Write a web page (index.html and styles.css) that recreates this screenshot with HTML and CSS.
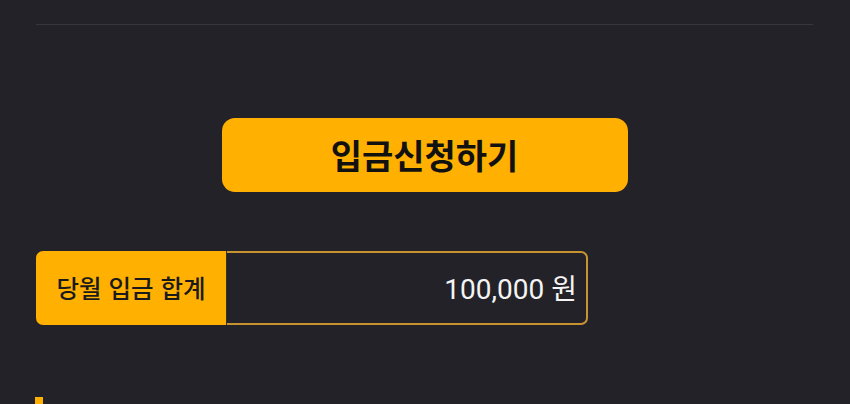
FILE: index.html
```html
<!DOCTYPE html>
<html lang="ko">
<head>
    <meta charset="UTF-8">
    <title>입금신청</title>
    <link rel="stylesheet" href="styles.css">
</head>
<body>
    <div class="wrap">
        <div class="topline"></div>
        <div class="btnbox">
            <button class="applybtn" type="button">입금신청하기</button>
        </div>
        <div class="sumrow">
            <div class="sumlabel">당월 입금 합계</div>
            <div class="sumvalue">100,000 원</div>
        </div>
        <div class="section">
            <span class="bar"></span>
        </div>
    </div>
</body>
</html>
```
FILE: styles.css
```css
*{padding: 0;margin: 0;box-sizing: border-box;}
html,body{
    background: #232228;
    height: 100%;
    overflow: hidden;
}
body{
    font-family: "Noto Sans CJK KR", "Noto Sans", sans-serif;
    color: #fff;
}
.wrap{
    padding: 24px 37px 0 36px;
}
.topline{
    height: 1px;
    background: #38373d;
}
.btnbox{
    display: flex;
    justify-content: center;
    padding-top: 93px;
}
.applybtn{
    width: 406px;
    height: 74px;
    border: none;
    border-radius: 13px;
    background: #ffb000;
    color: #111;
    font-family: inherit;
    font-size: 34px;
    font-weight: 700;
    padding-bottom: 2px;
}
.sumrow{
    display: flex;
    width: 552px;
    height: 74px;
    margin-top: 59px;
}
.sumlabel{
    width: 191px;
    background: #ffb000;
    border-radius: 7px 0 0 7px;
    color: #1a1a1a;
    font-size: 24.5px;
    font-weight: 500;
    display: flex;
    align-items: center;
    justify-content: center;
    padding-bottom: 2px;
    border-right: 1px solid #3a3220;
}
.sumvalue{
    flex: 1;
    display: flex;
    align-items: center;
    justify-content: flex-end;
    border: 2px solid #c89432;
    border-left: none;
    border-radius: 0 7px 7px 0;
    padding-right: 9px;
    padding-bottom: 2px;
    font-family: Roboto, "Noto Sans CJK KR", sans-serif;
    font-size: 28px;
    color: #f4f4f4;
}
.section{
    margin-top: 72px;
    margin-left: -1px;
}
.bar{
    display: block;
    width: 8px;
    height: 24px;
    background: #ffb000;
}
```
